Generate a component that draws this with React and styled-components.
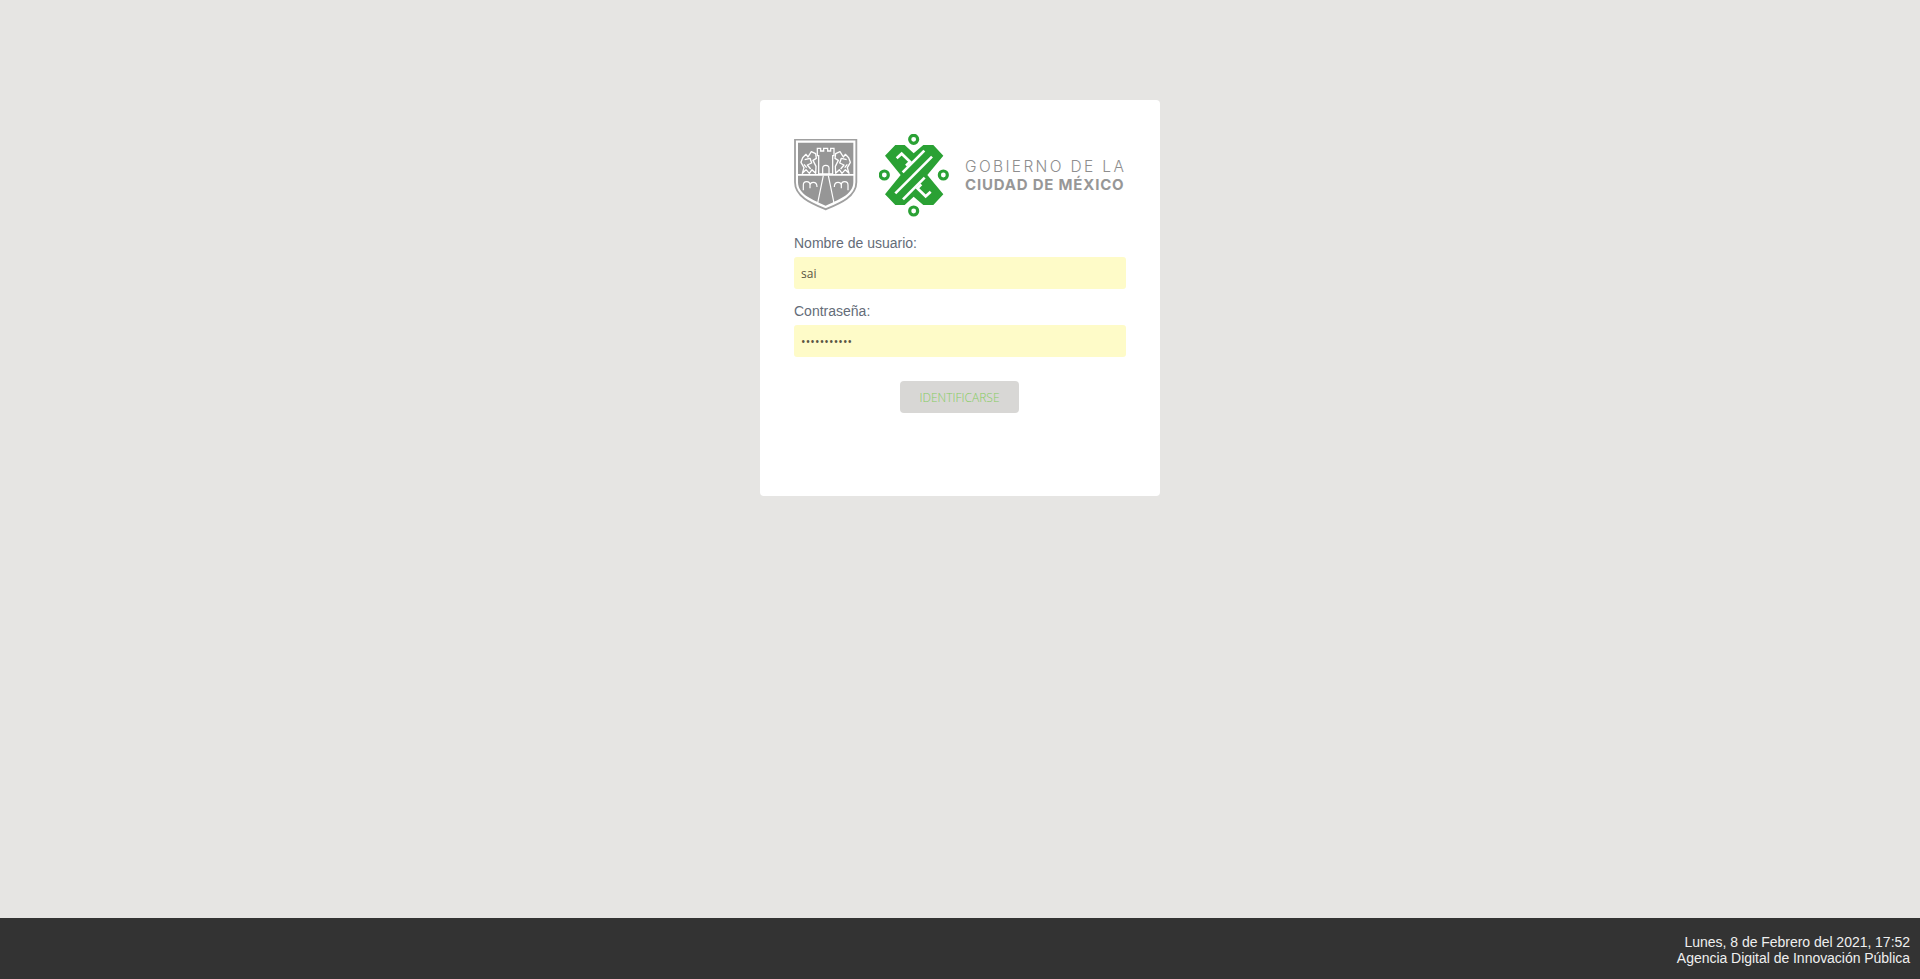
import React from 'react'
import styled, { createGlobalStyle } from 'styled-components'

const GlobalStyle = createGlobalStyle`
  html, body {
    margin: 0;
    padding: 0;
    height: 100%;
  }
  body {
    background: #e6e5e3;
    font-family: 'Liberation Sans', Arial, sans-serif;
  }
`

const Page = styled.div`
  min-height: 979px;
  display: flex;
  flex-direction: column;
`

const Main = styled.main`
  flex: 1;
  display: flex;
  justify-content: center;
  align-items: flex-start;
  padding-top: 100px;
`

const Card = styled.form`
  width: 400px;
  height: 396px;
  box-sizing: border-box;
  padding: 34px 34px 0;
  background: #fff;
  border-radius: 4px;
`

const LogoRow = styled.div`
  display: flex;
  align-items: center;
  height: 83px;
  margin-bottom: 17px;
`

const ShieldSvg = styled.svg`
  display: block;
  flex-shrink: 0;
`

const EmblemSvg = styled.svg`
  display: block;
  flex-shrink: 0;
  margin-left: 21px;
`

const Wordmark = styled.div`
  margin: 1px 0 0 16px;
  display: flex;
  flex-direction: column;
  white-space: nowrap;
  font-family: Inter, sans-serif;
  line-height: 18px;
`

const WordLight = styled.span`
  font-size: 15.5px;
  font-weight: 300;
  letter-spacing: 2.35px;
  color: #8e8e8e;
`

const WordBold = styled.span`
  font-size: 15px;
  font-weight: 700;
  letter-spacing: 0.8px;
  color: #979797;
`

const Field = styled.div`
  display: flex;
  flex-direction: column;
  margin-bottom: 13px;
`

const Label = styled.label`
  font-size: 14px;
  line-height: 16px;
  height: 23px;
  padding-top: 1px;
  box-sizing: border-box;
  color: #646c78;
`

const Input = styled.input`
  width: 332px;
  height: 32px;
  box-sizing: border-box;
  border: 0;
  outline: 0;
  padding: 0 7px;
  background: #fefbc8;
  border-radius: 3px;
  font-family: 'Open Sans', sans-serif;
  font-size: 12px;
  color: #5a5443;
`

const PasswordInput = styled(Input)`
  letter-spacing: 0.15px;
`

const Actions = styled.div`
  display: flex;
  justify-content: center;
  margin-top: 24px;
  padding-right: 1px;
`

const Submit = styled.button`
  width: 119px;
  height: 32px;
  border: 0;
  padding: 0;
  background: #d8d7d5;
  border-radius: 4px;
  font-family: 'Open Sans', sans-serif;
  font-weight: 300;
  font-size: 12px;
  color: #86cc62;
`

const Footer = styled.footer`
  height: 61px;
  box-sizing: border-box;
  padding: 16px 10px 0 0;
  background: #333;
  color: #efefef;
  font-size: 14px;
  line-height: 16px;
  letter-spacing: -0.03px;
  text-align: right;
`

const Lion = () => (
  <g fill="none" stroke="#fff" strokeWidth="4" strokeLinejoin="round">
    <path d="M68 116L78 106L84 114L94 98L107 104L109 118L99 124L108 142L107 163L96 152L88 163L78 152L67 163L72 146L63 130Z" />
    <path d="M74 122L90 118L95 132L82 138L92 150M72 136L80 146" />
  </g>
)

const Arches = () => (
  <path
    d="M70 214V198Q70 188 80 188Q90 188 90 198V208M90 200Q90 190 100 190Q111 190 111 204"
    fill="none"
    stroke="#fff"
    strokeWidth="3.6"
  />
)

const Shield = () => (
  <ShieldSvg width="64" height="73" viewBox="42 60 192 219">
    <path d="M45 62H229V190C229 235 175 255 137 271C99 255 45 235 45 190Z" fill="#fff" stroke="#a0a0a0" strokeWidth="5.5" />
    <path d="M54 71H220V165H54Z" fill="#969696" />
    <path d="M54 170H220V190C220 228 170 245 137 260C104 245 54 228 54 190Z" fill="#969696" />
    <path
      d="M112 88H122V96H131V88H143V96H152V88H162V110H158V165H116V110H112Z"
      fill="#969696"
      stroke="#fff"
      strokeWidth="3.8"
    />
    <path d="M128 165V148C128 136 147 136 147 148V165" fill="none" stroke="#fff" strokeWidth="3.6" />
    <Lion />
    <g transform="matrix(-1 0 0 1 274 0)">
      <Lion />
    </g>
    <path d="M130 170L113 252M145 170L162 252" fill="none" stroke="#fff" strokeWidth="3.6" />
    <Arches />
    <g transform="matrix(-1 0 0 1 274 0)">
      <Arches />
    </g>
  </ShieldSvg>
)

const green = '#2aa134'

// coordenadas tomadas del recorte a 3x
const Emblem = () => (
  <EmblemSvg width="70" height="83" viewBox="27 27 210 249">
    <g fill="none" stroke={green} strokeWidth="9.5">
      <circle cx="131" cy="43" r="12" />
      <circle cx="131" cy="258" r="12" />
      <circle cx="43" cy="150" r="12" />
      <circle cx="220" cy="150" r="12" />
    </g>
    <path
      d="M45 92L76 60H104L131 85L160 60H190L220 92L172 150L220 208L190 240H160L131 215L104 240H76L45 208L92 150Z"
      fill={green}
    />
    <g fill="none" stroke="#fff" strokeWidth="8">
      <path d="M80 100L95 86L120 110L108 122" />
      <path d="M98 142L163 77" />
      <path d="M186 95L76 205" />
      <path d="M164 158L99 223" />
      <path d="M182 200L167 214L142 190L154 178" />
    </g>
  </EmblemSvg>
)

export default function App() {
  return (
    <Page>
      <GlobalStyle />
      <Main>
        <Card>
          <LogoRow>
            <Shield />
            <Emblem />
            <Wordmark>
              <WordLight>GOBIERNO DE LA</WordLight>
              <WordBold>CIUDAD DE MÉXICO</WordBold>
            </Wordmark>
          </LogoRow>
          <Field>
            <Label htmlFor="usuario">Nombre de usuario:</Label>
            <Input id="usuario" type="text" defaultValue="sai" />
          </Field>
          <Field>
            <Label htmlFor="clave">Contraseña:</Label>
            <PasswordInput id="clave" type="password" defaultValue="sai12345678" />
          </Field>
          <Actions>
            <Submit type="button">IDENTIFICARSE</Submit>
          </Actions>
        </Card>
      </Main>
      <Footer>
        Lunes, 8 de Febrero del 2021, 17:52
        <br />
        Agencia Digital de Innovación Pública
      </Footer>
    </Page>
  )
}
